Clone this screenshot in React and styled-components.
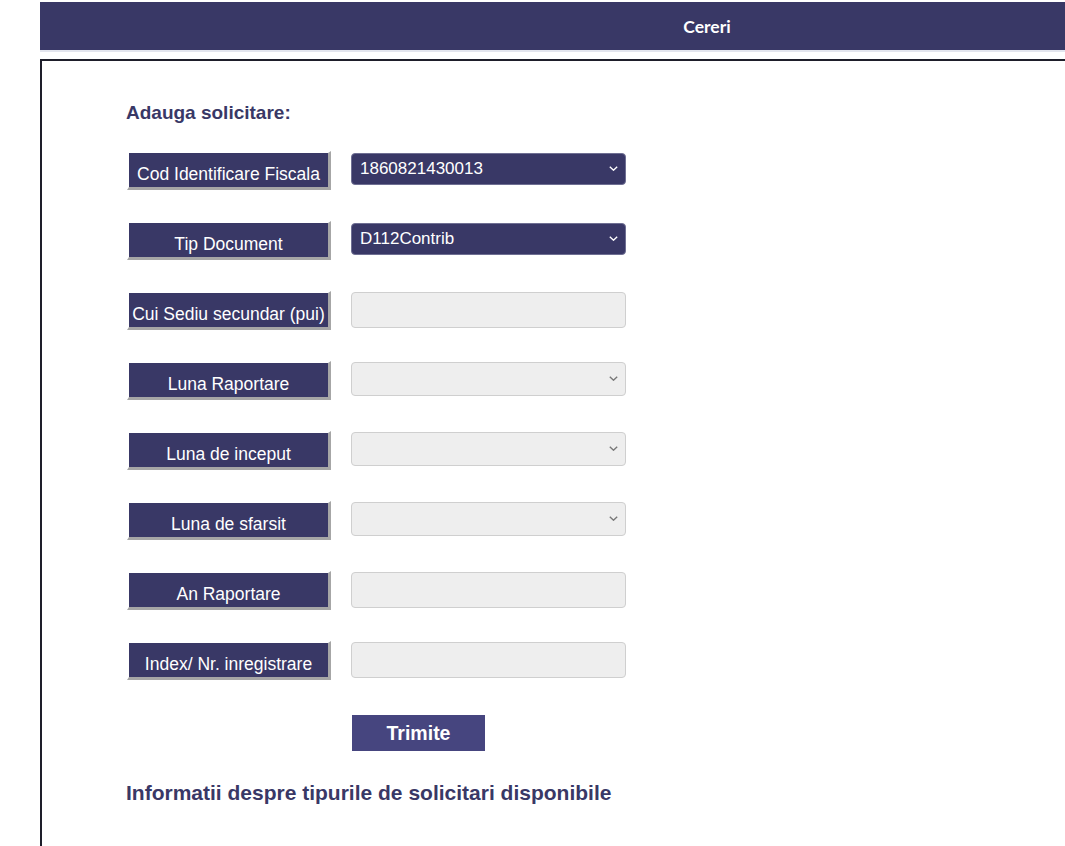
import React from "react";
import styled, { createGlobalStyle } from "styled-components";

const GlobalStyle = createGlobalStyle`
  html, body {
    margin: 0;
    padding: 0;
    background: #ffffff;
    overflow: hidden;
  }
  body {
    font-family: "Liberation Sans", Arial, sans-serif;
  }
`;

const NAVY = "#393866";

const Page = styled.div`
  padding: 2px 0 0 40px;
  width: 1400px;
`;

const Header = styled.div`
  width: 1334px;
  height: 48px;
  background: ${NAVY};
  border-bottom: 2px solid #e3e5ee;
  display: flex;
  align-items: center;
  justify-content: center;
  color: #ffffff;
  font-family: Lato, "Open Sans", sans-serif;
  font-weight: 700;
  font-size: 17.5px;
`;

const Content = styled.div`
  margin-top: 7px;
  width: 1200px;
  height: 800px;
  border-top: 2px solid #1e1e2a;
  border-left: 2px solid #1e1e2a;
  padding: 41px 0 0 84px;
  box-sizing: border-box;
`;

const Title = styled.h2`
  margin: 0;
  font-size: ${(p) => p.$size}px;
  line-height: ${(p) => Math.round(p.$size * 1.15)}px;
  font-weight: 700;
  color: ${NAVY};
`;

const Form = styled.div`
  margin-top: 27px;
  display: grid;
  grid-template-columns: 205px 275px;
  column-gap: 20px;
  row-gap: 30px;
  grid-auto-rows: 40px;
  align-items: start;
`;

const Label = styled.div`
  box-sizing: border-box;
  height: 39px;
  margin-left: 1px;
  background: ${NAVY};
  border-style: solid;
  border-width: 2px 3px 3px 2px;
  border-color: #ffffff #a6a6a6 #a6a6a6 #ffffff;
  color: #ffffff;
  font-size: 17.5px;
  line-height: 20px;
  padding-top: 11px;
  text-align: center;
  white-space: nowrap;
`;

const SelectWrap = styled.div`
  position: relative;
  margin-top: ${(p) => (p.$filled ? 2 : 1)}px;
  height: ${(p) => (p.$filled ? 32 : 34)}px;
`;

const Select = styled.select`
  appearance: none;
  -webkit-appearance: none;
  box-sizing: border-box;
  width: 100%;
  height: 100%;
  margin: 0;
  border-radius: 4px;
  border: 1px solid ${(p) => (p.$filled ? "#6f6f93" : "#cfcfcf")};
  background: ${(p) => (p.$filled ? NAVY : "#eeeeee")};
  color: #ffffff;
  font-family: "Liberation Sans", Arial, sans-serif;
  font-size: 17px;
  padding: 0 0 2px 8px;
  outline: none;
`;

const Chevron = styled.svg`
  position: absolute;
  right: 8px;
  top: 50%;
  margin-top: -3px;
  width: 9px;
  height: 5px;
  pointer-events: none;
`;

const Input = styled.input`
  box-sizing: border-box;
  width: 100%;
  height: 36px;
  margin: 1px 0 0;
  border-radius: 4px;
  border: 1px solid #cfcfcf;
  background: #eeeeee;
  font-family: "Liberation Sans", Arial, sans-serif;
  font-size: 17px;
  padding: 0 8px;
  outline: none;
`;

const Actions = styled.div`
  margin: 34px 0 0 226px;
`;

const Button = styled.button`
  width: 133px;
  height: 36px;
  border: none;
  background: #46457f;
  color: #ffffff;
  font-family: "Liberation Sans", Arial, sans-serif;
  font-weight: 700;
  font-size: 19.5px;
  padding: 0;
  cursor: pointer;
`;

const Footer = styled.div`
  margin-top: 30px;
`;

const rows = [
  { label: "Cod Identificare Fiscala", kind: "select", value: "1860821430013" },
  { label: "Tip Document", kind: "select", value: "D112Contrib" },
  { label: "Cui Sediu secundar (pui)", kind: "input" },
  { label: "Luna Raportare", kind: "select" },
  { label: "Luna de inceput", kind: "select" },
  { label: "Luna de sfarsit", kind: "select" },
  { label: "An Raportare", kind: "input" },
  { label: "Index/ Nr. inregistrare", kind: "input" },
];

function Field({ row }) {
  if (row.kind === "input") return <Input type="text" />;
  const filled = !!row.value;
  return (
    <SelectWrap $filled={filled}>
      <Select $filled={filled} defaultValue={row.value || ""}>
        <option value={row.value || ""}>{row.value || ""}</option>
      </Select>
      <Chevron viewBox="0 0 9 5">
        <path
          d="M0.8 0.8 L4.5 4.2 L8.2 0.8"
          fill="none"
          stroke={filled ? "#ffffff" : "#777777"}
          strokeWidth="1.4"
        />
      </Chevron>
    </SelectWrap>
  );
}

export default function App() {
  return (
    <>
      <GlobalStyle />
      <Page>
        <Header>Cereri</Header>
        <Content>
          <Title $size={19}>Adauga solicitare:</Title>
          <Form>
            {rows.map((r) => (
              <React.Fragment key={r.label}>
                <Label>{r.label}</Label>
                <Field row={r} />
              </React.Fragment>
            ))}
          </Form>
          <Actions>
            <Button>Trimite</Button>
          </Actions>
          <Footer>
            <Title $size={21}>
              Informatii despre tipurile de solicitari disponibile
            </Title>
          </Footer>
        </Content>
      </Page>
    </>
  );
}
